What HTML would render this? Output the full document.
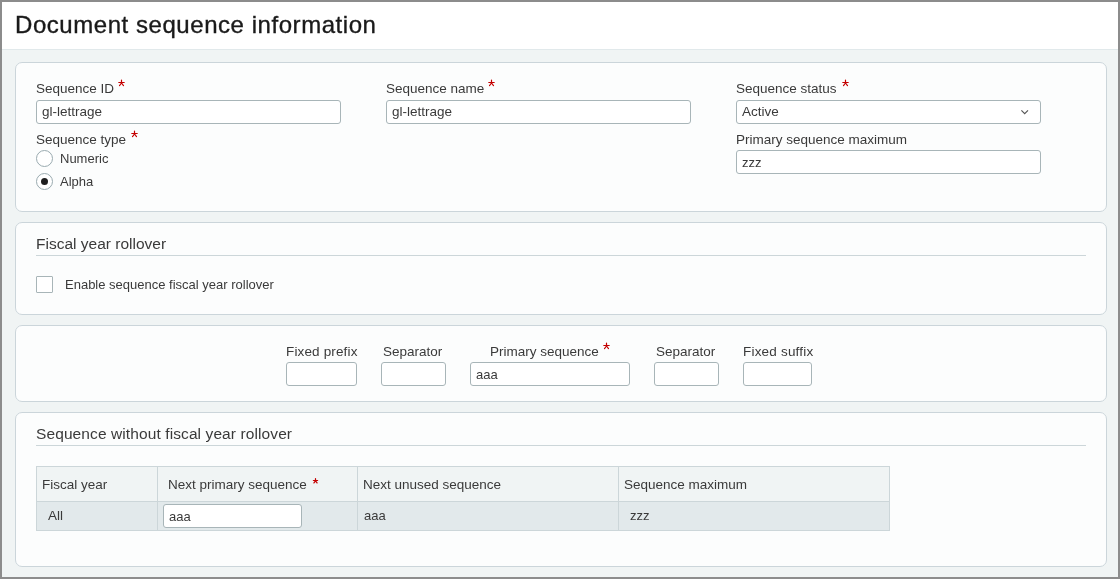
<!DOCTYPE html>
<html>
<head>
<meta charset="utf-8">
<style>
html,body{margin:0;padding:0;}
body{will-change:transform;width:1120px;height:579px;overflow:hidden;position:relative;background:#f0f4f4;font-family:"Liberation Sans",sans-serif;color:#333;}
.frame{position:absolute;left:0;top:0;width:1120px;height:579px;box-sizing:border-box;border:2px solid #8c8c8c;pointer-events:none;z-index:10;}
.hdr{position:absolute;left:2px;top:2px;width:1116px;height:47px;background:#fff;border-bottom:1px solid #e1e9eb;}
.ttl{position:absolute;left:13px;top:11px;font-size:24px;letter-spacing:0.55px;line-height:24px;color:#1a1a1a;-webkit-text-stroke:0.35px #1a1a1a;white-space:nowrap;}
.pnl{position:absolute;left:15px;width:1090px;background:#fcfdfd;border:1px solid #cbd5da;border-radius:7px;}
.t{position:absolute;white-space:nowrap;line-height:1;}
.l{font-size:13.5px;color:#3a3a3a;}
.s{font-size:13px;color:#3a3a3a;}
.h{font-size:15.5px;color:#3a3a3a;}
.ast{position:absolute;}
.ast path{fill:none;stroke:#c40000;stroke-width:1.2;stroke-linecap:round;}
.inp{position:absolute;box-sizing:border-box;height:24px;background:#fff;border:1px solid #a8b5b8;border-radius:3px;}
.rad{position:absolute;box-sizing:border-box;width:17px;height:17px;border:1px solid #9aabb0;border-radius:50%;background:#fff;}
.dot{position:absolute;left:4px;top:4px;width:7px;height:7px;border-radius:50%;background:#1e1e1e;}
.line{position:absolute;height:1px;background:#ccd6d9;}
.tbl{position:absolute;left:36px;top:466px;width:854px;height:65px;box-sizing:border-box;border:1px solid #ccd6d9;}
</style>
</head>
<body>
<div class="hdr"><div class="ttl">Document sequence information</div></div>

<!-- Panel 1 -->
<div class="pnl" style="top:62px;height:148px;"></div>
<div class="t l" style="left:36px;top:82px;">Sequence ID</div>
<svg class="ast" style="left:116px;top:78px;" width="10" height="10" viewBox="0 0 10 10"><path d="M5.5 2.1V5M2.8 4.5H8.2M5.5 5L3.5 7.6M5.5 5L7.5 7.6"/></svg>
<div class="inp" style="left:36px;top:100px;width:305px;"></div>
<div class="t l" style="left:42px;top:105px;">gl-lettrage</div>

<div class="t l" style="left:386px;top:82px;">Sequence name</div>
<svg class="ast" style="left:486px;top:78px;" width="10" height="10" viewBox="0 0 10 10"><path d="M5.5 2.1V5M2.8 4.5H8.2M5.5 5L3.5 7.6M5.5 5L7.5 7.6"/></svg>
<div class="inp" style="left:386px;top:100px;width:305px;"></div>
<div class="t l" style="left:392px;top:105px;">gl-lettrage</div>

<div class="t l" style="left:736px;top:82px;">Sequence status</div>
<svg class="ast" style="left:840px;top:78px;" width="10" height="10" viewBox="0 0 10 10"><path d="M5.5 2.1V5M2.8 4.5H8.2M5.5 5L3.5 7.6M5.5 5L7.5 7.6"/></svg>
<div class="inp" style="left:736px;top:100px;width:305px;"></div>
<div class="t l" style="left:742px;top:105px;">Active</div>
<svg style="position:absolute;left:1020px;top:108px;" width="10" height="8" viewBox="0 0 10 8"><path d="M1.4 2.4 L4.7 5.7 L8 2.4" fill="none" stroke="#555" stroke-width="1.15"/></svg>

<div class="t l" style="left:36px;top:133px;">Sequence type</div>
<svg class="ast" style="left:129px;top:129px;" width="10" height="10" viewBox="0 0 10 10"><path d="M5.5 2.1V5M2.8 4.5H8.2M5.5 5L3.5 7.6M5.5 5L7.5 7.6"/></svg>
<div class="rad" style="left:36px;top:150px;"></div>
<div class="t s" style="left:60px;top:152px;">Numeric</div>
<div class="rad" style="left:36px;top:173px;"><div class="dot"></div></div>
<div class="t s" style="left:60px;top:175px;">Alpha</div>

<div class="t l" style="left:736px;top:133px;">Primary sequence maximum</div>
<div class="inp" style="left:736px;top:150px;width:305px;"></div>
<div class="t s" style="left:742px;top:156px;">zzz</div>

<!-- Panel 2 -->
<div class="pnl" style="top:222px;height:91px;"></div>
<div class="t h" style="left:36px;top:236px;">Fiscal year rollover</div>
<div class="line" style="left:36px;top:255px;width:1050px;"></div>
<div class="inp" style="left:36px;top:276px;width:17px;height:17px;border-radius:1px;"></div>
<div class="t s" style="left:65px;top:278px;">Enable sequence fiscal year rollover</div>

<!-- Panel 3 -->
<div class="pnl" style="top:325px;height:75px;"></div>
<div class="t l" style="left:286px;top:345px;letter-spacing:0.15px;">Fixed prefix</div>
<div class="inp" style="left:286px;top:362px;width:71px;"></div>
<div class="t l" style="left:383px;top:345px;">Separator</div>
<div class="inp" style="left:381px;top:362px;width:65px;"></div>
<div class="t l" style="left:490px;top:345px;">Primary sequence</div>
<svg class="ast" style="left:601px;top:341px;" width="10" height="10" viewBox="0 0 10 10"><path d="M5.5 2.1V5M2.8 4.5H8.2M5.5 5L3.5 7.6M5.5 5L7.5 7.6"/></svg>
<div class="inp" style="left:470px;top:362px;width:160px;"></div>
<div class="t s" style="left:476px;top:367.5px;">aaa</div>
<div class="t l" style="left:656px;top:345px;">Separator</div>
<div class="inp" style="left:654px;top:362px;width:65px;"></div>
<div class="t l" style="left:743px;top:345px;letter-spacing:0.2px;">Fixed suffix</div>
<div class="inp" style="left:743px;top:362px;width:69px;"></div>

<!-- Panel 4 -->
<div class="pnl" style="top:412px;height:153px;"></div>
<div class="t h" style="left:36px;top:426px;letter-spacing:0.1px;">Sequence without fiscal year rollover</div>
<div class="line" style="left:36px;top:445px;width:1050px;"></div>
<div class="tbl">
  <div style="position:absolute;left:0;top:0;width:852px;height:34px;background:#f0f4f4;"></div>
  <div style="position:absolute;left:0;top:34px;width:852px;height:1px;background:#ccd6d9;"></div>
  <div style="position:absolute;left:0;top:35px;width:852px;height:28px;background:#e2e9eb;"></div>
  <div style="position:absolute;left:120px;top:0;width:1px;height:63px;background:#ccd6d9;"></div>
  <div style="position:absolute;left:320px;top:0;width:1px;height:63px;background:#ccd6d9;"></div>
  <div style="position:absolute;left:581px;top:0;width:1px;height:63px;background:#ccd6d9;"></div>
</div>
<div class="t l" style="left:42px;top:478px;">Fiscal year</div>
<div class="t l" style="left:168px;top:478px;">Next primary sequence</div>
<svg class="ast" style="left:310px;top:476px;" width="10" height="10" viewBox="0 0 10 10"><g transform="translate(5.5 4.5) scale(0.78) translate(-5.5 -4.5)"><path style="stroke-width:1.6" d="M5.5 2.1V5M2.8 4.5H8.2M5.5 5L3.5 7.6M5.5 5L7.5 7.6"/></g></svg>
<div class="t l" style="left:363px;top:478px;">Next unused sequence</div>
<div class="t l" style="left:624px;top:478px;">Sequence maximum</div>
<div class="t l" style="left:48px;top:509px;">All</div>
<div class="inp" style="left:163px;top:504px;width:139px;"></div>
<div class="t s" style="left:169px;top:509.5px;">aaa</div>
<div class="t s" style="left:364px;top:508.5px;">aaa</div>
<div class="t s" style="left:630px;top:508.5px;">zzz</div>

<div class="frame"></div>
</body>
</html>
